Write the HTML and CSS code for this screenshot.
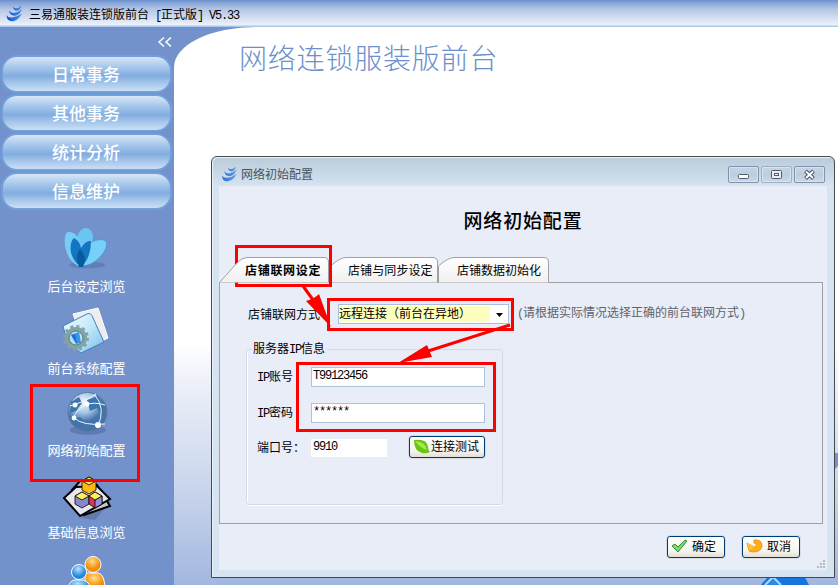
FILE: index.html
```html
<!DOCTYPE html>
<html lang="zh-CN">
<head>
<meta charset="utf-8">
<title>三易通服装连锁版前台</title>
<link rel="stylesheet" href="styles.css">
</head>
<body>
<svg class="defs" width="0" height="0">
  <defs>
    <linearGradient id="tabFill" x2="0" y2="1"><stop offset="0" stop-color="#fff"/><stop offset="1" stop-color="#f0f0f0"/></linearGradient>
    <linearGradient id="swoosh" x2="1" y2="0"><stop offset="0" stop-color="#0b4dd0"/><stop offset=".5" stop-color="#2a76e6"/><stop offset="1" stop-color="#5d8fd0"/></linearGradient>
    <linearGradient id="folder" x2="1" y2="1"><stop offset="0" stop-color="#f4fdff"/><stop offset=".5" stop-color="#c3e8fb"/><stop offset="1" stop-color="#77bce9"/></linearGradient>
    <radialGradient id="globe" cx=".4" cy=".25"><stop offset="0" stop-color="#f2faff"/><stop offset=".55" stop-color="#a3c6e6"/><stop offset="1" stop-color="#4673aa"/></radialGradient>
    <radialGradient id="orange" cx=".45" cy=".3"><stop offset="0" stop-color="#ffe08a"/><stop offset="1" stop-color="#f58a05"/></radialGradient>
    <radialGradient id="blue" cx=".45" cy=".3"><stop offset="0" stop-color="#b6e3ff"/><stop offset="1" stop-color="#2585dc"/></radialGradient>
    <symbol id="logo" viewBox="0 0 17 17">
      <path d="M.5 10Q2 13 6 12.500Q11 12 16 8.500Q13 14.500 8 16Q1 17.500 .5 10Z"/>
      <path d="M3 5.500Q5 8.500 8 8Q12 7.500 16 4Q14 9.500 10 10.500Q4 11.500 3 5.500Z"/>
      <path d="M7 1.500Q8 3.500 10 3.500Q13 3 15.500 .5Q14 5 11.500 5.500Q7.500 6 7 1.500Z"/>
    </symbol>
  </defs>
</svg>

<header class="titlebar">
  <svg class="app-logo" width="17" height="17" fill="url(#swoosh)"><use href="#logo"/></svg>
  <span>三易通服装连锁版前台<span class="lat"> [</span>正式版<span class="lat">] V5.33</span></span>
</header>

<div class="shell">
  <aside class="sidebar">
    <div class="collapse"><svg width="14" height="10" viewBox="0 0 14 10" fill="none" stroke="#fff" stroke-width="1.5"><path d="M6 .5L1 5L6 9.5M13 .5L8 5L13 9.5"/></svg></div>
    <nav class="nav">
      <a class="nav-btn">日常事务</a>
      <a class="nav-btn">其他事务</a>
      <a class="nav-btn">统计分析</a>
      <a class="nav-btn">信息维护</a>
    </nav>
    <ul class="shortcuts">
      <li>
        <svg width="50" height="50" viewBox="0 0 50 50"><ellipse cx="26" cy="41" rx="18" ry="3.500" fill="#4c6497" opacity=".4"/><path d="M19 42C10 19 17 4 25 4C36 5 34 26 19 42Z" fill="#6ac5f2"/><path d="M18 42C22 22 31 14 43 16C52 20 36 44 18 42Z" fill="#77d0f8" stroke="#3594c8" stroke-width=".6"/><path d="M20 43C2 38 1 10 7 8C18 7 24 24 20 43Z" fill="#76cdf6"/><path d="M20 43C7 34 8 18 13 14Q19 17 20 24Q25 16 30 17Q30 34 20 43Z" fill="#1276c2"/><path d="M18 43Q13 32 19 25Q27 33 22 43Z" fill="#075c9c"/></svg>
        <span>后台设定浏览</span>
      </li>
      <li>
        <svg width="50" height="50" viewBox="0 0 50 50"><path d="M12 8L37 2L47 32L25 43Z" fill="#ededf0" stroke="#fff"/><path d="M2 20L26 8Q30 6 32 12L43 36L20 47Q5 37 2 20Z" fill="url(#folder)" stroke="#3d83b9"/><circle cx="15" cy="32" r="9" fill="none" stroke="#84a3a5" stroke-width="4"/><circle cx="15" cy="32" r="11.500" fill="none" stroke="#84a3a5" stroke-width="3" stroke-dasharray="3 3.020"/><circle cx="15" cy="32" r="7" fill="#b5e0fa" stroke="#52777a"/><path d="M10 29L18 26L20 37L15 38Z" fill="#3b93e8"/><path d="M10 29L14 28L16 38Z" fill="#1674d4"/></svg>
        <span>前台系统配置</span>
      </li>
      <li>
        <svg width="50" height="50" viewBox="0 0 50 50"><ellipse cx="27" cy="42" rx="18" ry="5" fill="#435b8c" opacity=".4"/><circle cx="26.500" cy="24" r="19.500" fill="url(#globe)" stroke="#5d789e"/><path d="M26 12L37 8L44 18L40 27L36 20L29 23ZM10 14L18 9L21 15L15 23L9 25ZM12 31L19 29L23 33L20 40Q14 37 12 31ZM30 33L39 31L36 39Z" fill="#3d74aa"/><path d="M9 18Q22 15 35 6M12 30Q22 10 44 17M13 30Q22 38 44 36M33 6Q46 20 36 40" fill="none" stroke="#eaf8ff"/><g fill="#fff"><circle cx="14" cy="17" r="2.500"/><circle cx="26" cy="16" r="2.500"/><circle cx="13" cy="30" r="2.400"/><circle cx="37" cy="37" r="3"/></g></svg>
        <span>网络初始配置</span>
      </li>
      <li>
        <svg width="50" height="50" viewBox="0 0 50 50"><path d="M6 20L28 5L48 29L33 47L20 45Z" fill="#55628c" opacity=".5"/><path d="M10 17L19 7L35 12L48 33L22 42Z" fill="#c4c5d0" stroke="#000" stroke-width="2"/><path d="M14 14L2 25L18 43L48 26L35 13Z" fill="#e7e7ef" stroke="#000" stroke-width="2"/><g stroke="#000" stroke-width=".8"><path d="M13 23L20 19L27 23V31L20 35L13 31Z" fill="#8787ce"/><path d="M13 23L20 19L27 23L20 27Z" fill="#ffef5b"/><path d="M27 23L33 19L40 23V31L33 35L27 31Z" fill="#d63955"/><path d="M33 27L40 23V31L33 35Z" fill="#9391d8"/><path d="M27 23L33 19L40 23L33 27Z" fill="#fff05d"/><path d="M20 8L27 4L34 8V17L27 21L20 17Z" fill="#ffb914"/><path d="M20 8L27 4L34 8L27 12Z" fill="#ffe653"/></g></svg>
        <span>基础信息浏览</span>
      </li>
      <li>
        <svg width="50" height="50" viewBox="0 0 50 50"><circle cx="31" cy="12.500" r="8" fill="url(#orange)" stroke="#fff"/><path d="M23 21H36Q43 22 43 38H23Z" fill="url(#orange)" stroke="#fff"/><circle cx="17" cy="20" r="7.500" fill="url(#blue)" stroke="#fff"/><path d="M5 40Q6 29 13 28H21Q29 30 29 40Z" fill="url(#blue)" stroke="#fff"/></svg>
      </li>
    </ul>
  </aside>

  <main class="workspace">
    <h1>网络连锁服装版前台</h1>
    <svg class="backdrop-art" width="90" height="135" viewBox="0 0 90 135"><path d="M84 3H90V16L86 20H84Z" fill="#7693cf"/><path d="M13 135Q18 128 25 123H53Q58 128 61 135Z" fill="#1676dd"/><path d="M17 135L25 127L33 135" fill="#278be9" stroke="#a9d9ff" stroke-width="2"/></svg>
  </main>
</div>

<section class="dialog">
  <div class="dialog-title">
    <svg class="dialog-logo" width="17" height="16" fill="url(#swoosh)"><use href="#logo"/></svg>
    <span>网络初始配置</span>
    <div class="win-btns">
      <span class="win-btn"><svg width="29" height="15"><rect x="9.500" y="7.500" width="10" height="4" rx="1" fill="#fff" stroke="#555a6b"/></svg></span>
      <span class="win-btn dim"><svg width="29" height="15"><rect x="9.500" y="3.500" width="10" height="8" rx="1" fill="#e8eef5" stroke="#555a6b"/><rect x="12.500" y="6.500" width="4" height="2" fill="#fff" stroke="#555a6b"/></svg></span>
      <span class="win-btn"><svg width="29" height="15"><path d="M10.500 4L18.500 11.500M18.500 4L10.500 11.500" stroke="#555a6b" stroke-width="4"/><path d="M11 4.500L18 11M18 4.500L11 11" stroke="#fff" stroke-width="1.800"/></svg></span>
    </div>
  </div>
  <div class="client">
    <h2>网络初始配置</h2>
    <div class="tabs">
      <div class="tab active"><svg width="111" height="26"><path d="M.5 25.500L18 6Q23 .5 28 .5H105Q109.500 .5 109.500 5V25.500" fill="url(#tabFill)" stroke="#a0a0a4"/></svg><span>店铺联网设定</span></div>
      <div class="tab second"><svg width="108" height="26"><path d="M.5 25.500V9Q10 .5 16 .5H103Q107.500 .5 107.500 5V25.500" fill="url(#tabFill)" stroke="#a0a0a4"/></svg><span>店铺与同步设定</span></div>
      <div class="tab third"><svg width="111" height="26"><path d="M.5 25.500V9Q10 .5 16 .5H106Q110.500 .5 110.500 5V25.500" fill="url(#tabFill)" stroke="#a0a0a4"/></svg><span>店铺数据初始化</span></div>
    </div>
    <div class="panel">
      <div class="mode-row">
        <label>店铺联网方式</label>
        <div class="select"><span class="value">远程连接（前台在异地）</span><svg width="17" height="18"><path d="M5 8H12L8.500 12Z"/></svg></div>
        <span class="note"><span class="lat">(</span>请根据实际情况选择正确的前台联网方式<span class="lat">)</span></span>
      </div>
      <fieldset>
        <legend>服务器<span class="lat">IP</span>信息</legend>
        <div class="field"><label><span class="lat">IP</span>账号</label><div class="input lat">T99123456</div></div>
        <div class="field"><label><span class="lat">IP</span>密码</label><div class="input lat">******</div></div>
        <div class="field port"><label>端口号：</label><div class="input short lat">9910</div>
          <button class="btn test"><svg width="18" height="18" viewBox="0 0 18 18"><path d="M1 3Q14 1 15 10Q15 13 17 15Q13 17 9 16Q1 14 1 3Z" fill="#68c510"/><path d="M2 4Q13 5 14 13Q7 11 2 4Z" fill="#a5e653"/></svg>连接测试</button></div>
      </fieldset>
    </div>
    <div class="actions">
      <button class="btn"><svg width="17" height="16" viewBox="0 0 17 16"><path d="M1 8L4 6L7 9L14 2L16 3L7 14Z" fill="#6fe35c" stroke="#3d8644"/></svg>确定</button>
      <button class="btn"><svg width="17" height="16" viewBox="0 0 17 16"><path d="M1 5L4 7Q7 11 10 8Q12 6 8 5L8 2Q16 1 16 8Q15 14 7 14L3 13Z" fill="#ffb018" stroke="#ec8300" stroke-width=".8"/><path d="M1 4.500L9 8.500L3 13Z" fill="#ffc238"/></svg>取消</button>
    </div>
    <svg class="grip" width="9" height="9" fill="#b5b8bf"><path d="M6 0h2v2h-2zM3 3h2v2h-2zM6 3h2v2h-2zM0 6h2v2h-2zM3 6h2v2h-2zM6 6h2v2h-2z"/></svg>
  </div>
</section>

<svg class="annotations" width="838" height="585" fill="none" stroke="#f00" stroke-width="3">
  <rect x="31.500" y="385.500" width="107" height="95"/>
  <rect x="236.500" y="246.500" width="94" height="39"/>
  <rect x="328.500" y="299.500" width="184" height="30"/>
  <rect x="297.500" y="363.500" width="197" height="67"/>
  <path d="M303 286L316 304M510 325L425 352"/>
  <path d="M306 301Q314 299 319 294L331 327ZM427 345L432 357L398 363Z" fill="#f00" stroke="none"/>
</svg>
</body>
</html>
```

FILE: styles.css
```css
* { box-sizing: border-box; }
body {
  margin: 0;
  width: 838px;
  height: 585px;
  overflow: hidden;
  position: relative;
  font: 12px/16px "Noto Sans CJK SC", sans-serif;
  color: #000;
  background: #fff;
}
svg { display: block; flex: none; }
.defs { position: absolute; }
.lat { font-family: "Liberation Mono", monospace; letter-spacing: -1.2px; white-space: pre; }

.titlebar {
  height: 27px;
  display: flex;
  align-items: center;
  gap: 6px;
  padding: 2px 0 0 6px;
  background: linear-gradient(#6a8fce 0, #80a0d5 2px, #b3c5e5 9px, #edf2fa 25px, #a8c8ef 26px);
}
.app-logo { margin-top: -2px; }
.shell { display: flex; height: 558px; background: #7392cc; overflow: hidden; }
.sidebar { width: 174px; height: 558px; flex: none; overflow: hidden; }
.collapse { height: 28px; padding: 10px 0 0 158px; }
.nav { display: flex; flex-direction: column; gap: 1px; padding: 0 1px; }
.nav-btn {
  height: 38px;
  width: 171px;
  border: 2px solid #70a0dc;
  border-radius: 16px;
  display: flex;
  align-items: center;
  justify-content: center;
  padding-right: 1px;
  color: #fff;
  font-size: 17px;
  font-weight: 500;
  background: linear-gradient(#d8e6f6, #a9c9ec 28%, #82ade0 56%, #a4c6eb 76%, #cbdff4);
}
.shortcuts { list-style: none; margin: 0; padding: 14px 0 0; }
.shortcuts li {
  height: 82px;
  display: flex;
  flex-direction: column;
  align-items: center;
  color: #fff;
  font-size: 13px;
}
.shortcuts li:nth-child(-n+3) svg { margin-left: -2px; }
.shortcuts li:nth-child(4) svg { margin-top: 3px; margin-bottom: -3px; }
.shortcuts span { margin-top: 4px; margin-left: -1px; }
.workspace {
  flex: 1;
  position: relative;
  border-top-left-radius: 82px 40px;
  background: linear-gradient(#fff 0, #fff 315px, #ebeff9 360px, #c8d4ec 465px, #a2b7df 558px);
}
h1 {
  margin: 0;
  padding: 10px 0 0 65px;
  font-size: 28px;
  line-height: 40px;
  font-weight: 300;
  letter-spacing: .8px;
  color: #6d8fcb;
}
.backdrop-art { position: absolute; right: 0; bottom: 0; }

.dialog {
  position: absolute;
  left: 211px;
  top: 156px;
  width: 624px;
  height: 422px;
  padding: 0 7px 7px;
  border: 1px solid #454a4f;
  border-radius: 6px 6px 0 0;
  background: linear-gradient(#bacbda, #d6e4f1 30px, #d6e4f1);
  box-shadow: inset 1px 1px #e9f2fa;
}
.dialog-title { height: 29px; display: flex; align-items: flex-start; padding: 9px 0 0 2px; color: #4a535e; }
.dialog-title > span { margin-left: 3px; }
.dialog-logo { opacity: .8; }
.win-btns { margin: 0 2px 0 auto; display: flex; gap: 2px; }
.win-btn { width: 31px; height: 17px; border: 1px solid #8492b1; border-radius: 2px; background: linear-gradient(#c6d5e5, #bccddd 50%, #cad9e8); box-shadow: inset 0 0 0 1px #d7e3ee; }
.win-btn.dim { border-color: #a2afbe; }
.client { position: relative; height: 384px; background: #e9edf8; }
h2 { margin: 0; height: 71px; padding-top: 19px; font-size: 19px; line-height: 30px; letter-spacing: .85px; font-weight: 500; text-align: center; }
.tabs { display: flex; height: 25px; }
.tab { position: relative; height: 26px; flex: none; }
.tab span { position: absolute; top: 5px; white-space: nowrap; }
.active { z-index: 1; }
.active span { left: 26px; font-weight: 700; letter-spacing: .7px; }
.second span { left: 18px; letter-spacing: .1px; }
.third span { left: 19px; }
.panel { height: 242px; width: 604px; border: 1px solid #a0a0a4; padding: 21px 0 0 26px; }
.mode-row { display: flex; height: 20px; align-items: center; }
.mode-row label { width: 92px; padding-left: 2px; }
.select { width: 171px; height: 20px; border: 1px solid #a9bfdc; background: #fff; display: flex; justify-content: space-between; }
.value { width: 151px; height: 16px; margin-top: 1px; line-height: 13px; background: #ffffbd; white-space: nowrap; }
.note { margin: -3px 0 0 8px; color: #60636b; }
fieldset { margin: 16px 0 0; width: 257px; height: 165px; border: 1px solid #d4d9e2; border-radius: 3px; padding: 9px 0 0 10px; box-shadow: inset 1px 0 #fff, 0 1px #fff; }
legend { padding: 0 2px; margin-left: -6px; }
.field { height: 36px; display: flex; align-items: flex-start; }
.field label { width: 54px; padding-top: 1px; white-space: nowrap; }
.port { margin-top: -1px; }
.input { width: 174px; height: 20px; border: 1px solid #adc2de; background: #fff; padding: 0 1px; }
.short { width: 76px; height: 18px; border-color: #fff; line-height: 15px; margin-top: 1px; }
.btn { height: 22px; width: 58px; border: 1px solid #003c74; border-radius: 3px; padding: 0 3px 2px; display: flex; align-items: center; gap: 4px; font: inherit; color: #000; white-space: nowrap; background: linear-gradient(#fff, #f5f4ee 70%, #e3dfd3); box-shadow: 0 0 0 1px #d7dde8; }
.test { width: 76px; margin: -2px 0 0 22px; gap: 0; }
.actions { display: flex; gap: 17px; padding: 12px 0 0 448px; }
.grip { position: absolute; right: 1px; bottom: 1px; }
.annotations { position: absolute; left: 0; top: 0; pointer-events: none; }
```
